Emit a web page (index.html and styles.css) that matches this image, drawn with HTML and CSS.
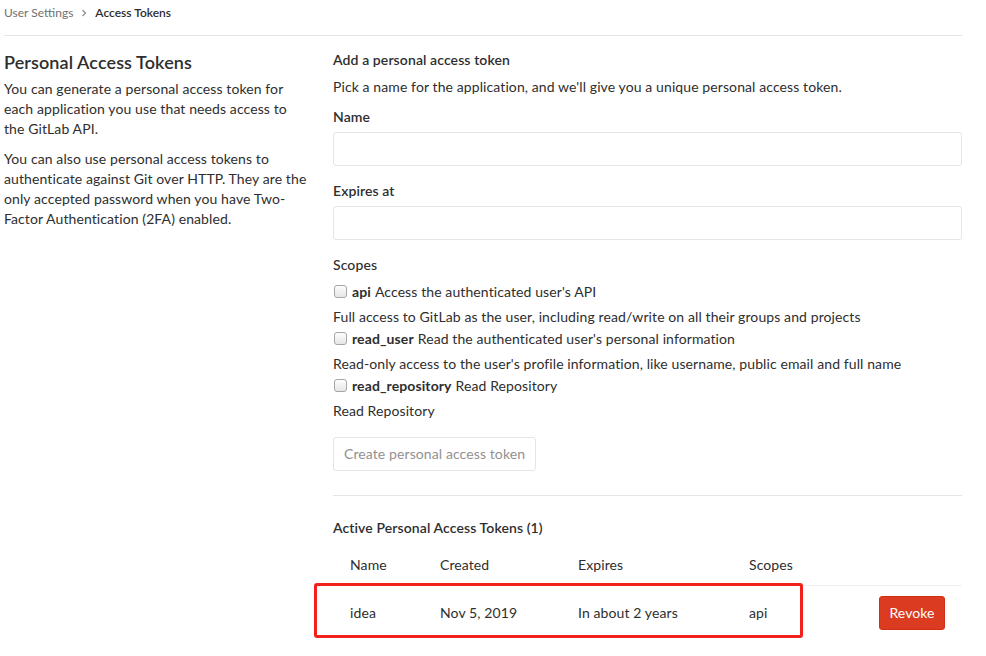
FILE: index.html
```html
<!DOCTYPE html>
<html>
<head>
<meta charset="utf-8">
<title>Access Tokens</title>
<link rel="stylesheet" href="styles.css">
</head>
<body>
<div class="page">
  <nav class="crumbs">
    <span class="crumb-link">User Settings</span>
    <svg class="chev" width="6" height="8" viewBox="0 0 6 8"><path d="M1.5 1 L4.5 4 L1.5 7" fill="none" stroke="#8c8c8c" stroke-width="1.2"/></svg>
    <span class="crumb-current">Access Tokens</span>
  </nav>
  <div class="layout">
    <aside class="side">
      <h4 class="side-title">Personal Access Tokens</h4>
      <p>You can generate a personal access token for each application you use that needs access to the GitLab API.</p>
      <p>You can also use personal access tokens to authenticate against Git over HTTP. They are the only accepted password when you have Two-Factor Authentication (2FA) enabled.</p>
    </aside>
    <main class="main">
      <h5 class="form-title">Add a personal access token</h5>
      <p class="lead">Pick a name for the application, and we'll give you a unique personal access token.</p>
      <label class="field-label first">Name</label>
      <div class="input"></div>
      <label class="field-label">Expires at</label>
      <div class="input"></div>
      <div class="scopes-label">Scopes</div>
      <div class="scope">
        <div class="check-row"><span class="box"></span><b>api</b> Access the authenticated user's API</div>
        <div class="help">Full access to GitLab as the user, including read/write on all their groups and projects</div>
      </div>
      <div class="scope">
        <div class="check-row"><span class="box"></span><b>read_user</b> Read the authenticated user's personal information</div>
        <div class="help">Read-only access to the user's profile information, like username, public email and full name</div>
      </div>
      <div class="scope">
        <div class="check-row"><span class="box"></span><b>read_repository</b> Read Repository</div>
        <div class="help">Read Repository</div>
      </div>
      <div class="actions"><span class="btn-disabled">Create personal access token</span></div>
      <hr class="sep">
      <h5 class="active-title">Active Personal Access Tokens (1)</h5>
      <div class="table-wrap">
        <div class="trow thead">
          <div class="c1">Name</div>
          <div class="c2">Created</div>
          <div class="c3">Expires</div>
          <div class="c4">Scopes</div>
          <div class="c5"></div>
        </div>
        <div class="trow tbody">
          <div class="c1">idea</div>
          <div class="c2">Nov 5, 2019</div>
          <div class="c3">In about 2 years</div>
          <div class="c4">api</div>
          <div class="c5"><span class="revoke">Revoke</span></div>
        </div>
        <div class="highlight"></div>
      </div>
    </main>
  </div>
</div>
</body>
</html>
```

FILE: styles.css
```css
* { box-sizing: border-box; }
html, body { margin: 0; padding: 0; background: #fff; }
body {
  font-family: "Segoe UI", Lato, "Noto Sans", "Liberation Sans", sans-serif;
  font-size: 14px;
  line-height: 20px;
  letter-spacing: 0.1px;
  color: #2e2e2e;
}
.page { width: 962px; padding-left: 4px; }
.crumbs {
  height: 36px;
  border-bottom: 1px solid #e5e5e5;
  display: flex;
  align-items: center;
  padding-bottom: 10px;
  font-size: 12px;
  letter-spacing: 0;
}
.crumb-link { color: #707070; }
.chev { margin: 0 8px 0 8px; }
.crumb-current { color: #2e2e2e; font-weight: 600; }
.layout {
  display: grid;
  grid-template-columns: 314px 629px;
  column-gap: 15px;
}
.side { padding-right: 10px; }
.side-title {
  margin: 14px 0 0;
  font-size: 18px;
  line-height: 24px;
  font-weight: 600;
  color: #2e2e2e;
}
.side p { margin: 5px 0 10px; }
.side p + p { margin-top: 0; }
.main { padding-top: 14px; }
.form-title {
  margin: 0;
  font-size: 14px;
  font-weight: 600;
}
.lead { margin: 7px 0 0; }
.field-label { display: block; font-weight: 600; margin-top: 15px; }
.field-label.first { margin-top: 10px; }
.input {
  margin-top: 5px;
  height: 34px;
  border: 1px solid #e5e5e5;
  border-radius: 3px;
}
.scopes-label { margin-top: 15px; font-weight: 500; }
.scope { margin-top: 2px; }
.scopes-label + .scope { margin-top: 7px; }
.check-row { display: flex; align-items: center; }
.check-row b { font-weight: 700; margin-right: 4px; }
.box {
  width: 13px; height: 13px;
  border: 1px solid #a6a6a6;
  border-radius: 3px;
  background: linear-gradient(#fdfdfd, #e6e6e6);
  margin: 0 5px 2px 1px;
}
.help { margin-top: 5px; }
.actions { margin-top: 16px; }
.btn-disabled {
  display: inline-block;
  height: 34px;
  line-height: 32px;
  padding: 0 10px;
  border: 1px solid #e5e5e5;
  border-radius: 3px;
  color: #919191;
}
.sep { margin: 24px 0 0; border: 0; border-top: 1px solid #e5e5e5; }
.active-title { margin: 22px 0 0; font-size: 14px; font-weight: 600; }
.table-wrap { position: relative; margin-top: 7px; }
.trow { display: flex; align-items: center; }
.trow > div { padding: 0 16px 0 17px; }
.c1 { width: 90px; }
.c2 { width: 138px; }
.c3 { width: 171px; }
.c4 { width: 130px; }
.c5 { width: 100px; }
.thead { height: 41px; border-bottom: 1px solid #f0f0f0; }
.tbody { height: 54px; }
.revoke {
  display: inline-block;
  width: 66px;
  height: 34px;
  text-align: center;
  background: #db3b21;
  color: #fff;
  border-radius: 3px;
  border: 1px solid #d22f16;
  line-height: 32px;
}
.highlight {
  position: absolute;
  left: -19px;
  top: 38px;
  width: 489px;
  height: 55px;
  border: 3px solid #f3211b;
  border-radius: 3px;
  pointer-events: none;
}
```
